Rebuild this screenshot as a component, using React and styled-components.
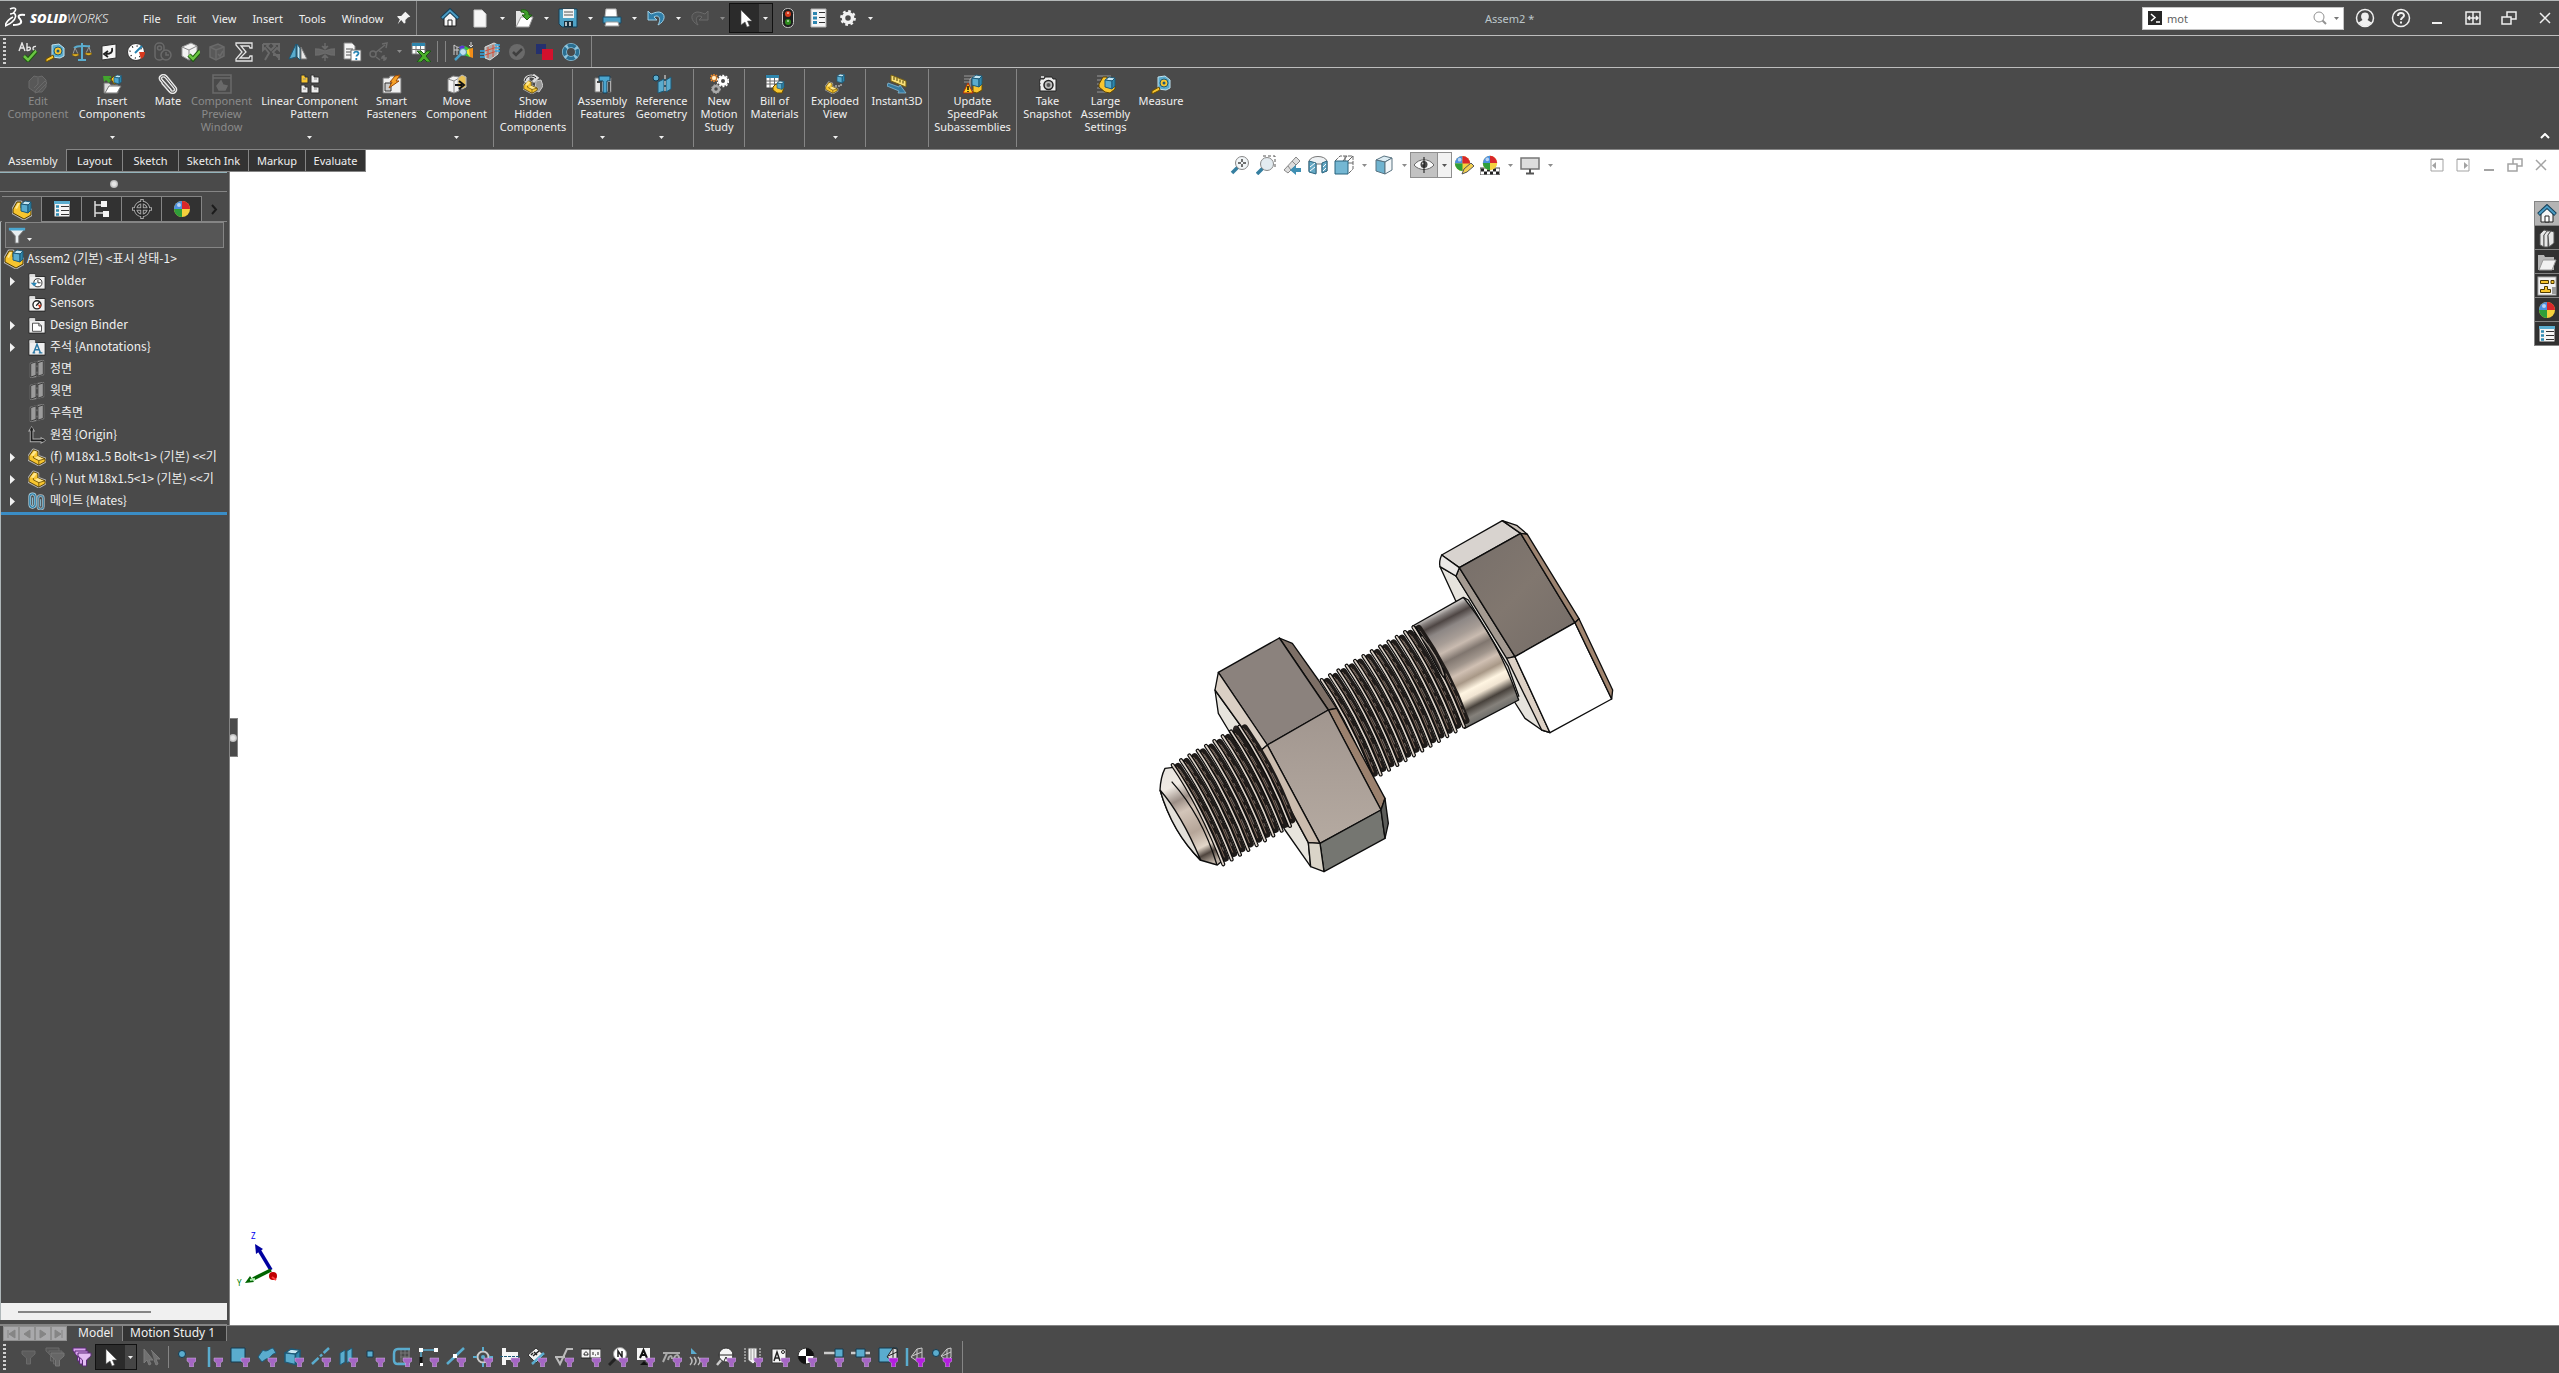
import React from 'react';
import styled, { createGlobalStyle, css } from 'styled-components';

const B = '#5aacce';
const D = '#1d5a78';
const W = '#f2f2f2';
const K = '#262626';
const Y = '#f7c52f';
const G = '#8c8c8c';
const X = '#6a6a6a';

const GlobalStyle = createGlobalStyle`
  * { box-sizing: border-box; }
  html, body, #root { height: 100%; }
  body {
    margin: 0;
    overflow: hidden;
    background: #4a4a4a;
    color: #f0f0f0;
    font: 11px/13px 'Noto Sans', 'Noto Sans CJK KR', sans-serif;
  }
  button, input { font: inherit; color: inherit; }
  svg { display: block; flex: none; }
`;

/* ---------- icons ---------- */

const Part = () => (
  <g strokeLinejoin="round">
    <path d="M1 9l5-7 5 2v5l8 3v3l-7 4-11-6z" fill="none" stroke="#b4b4b4" strokeWidth="3" />
    <path d="M1 9l5-7 5 2v5l8 3v3l-7 4-11-6z" fill={Y} stroke="#4f3a00" />
    <path d="M3 8l4-5 3 1-4 5zM7 11l4-2 6 3-4 2z" fill="#ffe78c" />
    <path d="M12 19v-5l-6-3V9M12 14l7-2" fill="none" stroke="#4f3a00" strokeWidth=".8" />
  </g>
);
const Cube = ({ x = 0, y = 0, c = B, s = D }) => (
  <g transform={`translate(${x} ${y})`} stroke={s} strokeLinejoin="round">
    <path d="M0 3l4-3 6 1-3 3z" fill="#c5e6f2" />
    <path d="M0 3l7 1v8l-7-2z" fill={c} />
    <path d="M7 4l3-3v8l-3 3z" fill="#2e87ac" />
  </g>
);
const Folder = ({ children }) => (
  <g>
    <path d="M1 2h7v3h11v14H1z" fill="#efefef" stroke="#222" />
    <path d="M2 2.500h6v3H2z" fill="#ddd" />
    {children}
  </g>
);
const Plane = (
  <g strokeLinejoin="round">
    <path d="M3 4l7-2 7-1v15l-7 2-7 1z" fill="#9c9c9c" stroke="#8f8f8f" strokeWidth="2" />
    <path d="M3 4l6-2v15l-6 2zM11 3l6-2v15l-6 2z" fill="#9c9c9c" stroke="#333" />
    <path d="M10 1v18" stroke="#2a2a2a" strokeDasharray="5 2" />
  </g>
);
const Ball = (
  <g>
    <circle cx="10" cy="10" r="8" fill="#f5d13d" />
    <path d="M10 10V2a8 8 0 0 0-8 8z" fill="#4b8fe0" />
    <path d="M10 10V2a8 8 0 0 1 8 8z" fill="#d9272b" />
    <path d="M10 10H2a8 8 0 0 0 8 8z" fill="#2f9e3a" />
    <circle cx="7" cy="6" r="2" fill="#fff" opacity=".6" />
  </g>
);
const House = (
  <g>
    <path d="M4 9l6-6 6 6v9H4z" fill="#f5f5f5" stroke="#222" />
    <path d="M8 12h4v6H8z" fill="#fff" stroke="#222" />
    <path d="M1.500 10.500L10 2.500l8.500 8" fill="none" stroke="#163f57" strokeWidth="4" />
    <path d="M2 10l8-7.500L18 10" fill="none" stroke="#4b9cc4" strokeWidth="2" />
  </g>
);
const Sheet = (
  <g>
    <path d="M2 2h16v16H2z" fill="#f4f4f4" stroke="#2b2b2b" />
    <path d="M2 2h16v3H2z" fill={B} />
    <path d="M4 7.500h3M4 11.500h3M4 15.500h3" stroke="#2e8ab2" strokeWidth="2.500" />
    <path d="M9 7.500h8M9 11.500h8M9 15.500h8" stroke="#333" />
  </g>
);
const Funnel = ({ c = '#a566c4' }) => (
  <path d="M11 11h9v3l-2.500 2v4h-4v-4L11 14z" fill={c} stroke="#d3b5e0" strokeWidth=".5" />
);
const BigFunnel = ({ x, y, c, s }) => (
  <path transform={`translate(${x} ${y})`} d="M0 0h13v3L8.500 7v6h-4V7L0 3z" fill={c} stroke={s} />
);
const Cursor = (
  <path d="M6 2v15l4-3 2 5 2.500-1-2-5H17z" fill="#fff" stroke="#555" strokeWidth=".6" />
);
const Tape = (
  <g>
    <path d="M7 3l7-1 5 4v8l-4 2-8-1z" fill={B} stroke="#bfe2ef" />
    <circle cx="13" cy="9" r="4" fill={Y} stroke={D} />
    <circle cx="13" cy="9" r="1.500" fill={D} />
    <path d="M8 13l-7 4v3l8-4z" fill={Y} stroke="#6b4e00" />
  </g>
);

const icons = {
  home: House,
  newDoc: <path d="M4 2h8l4 4v13H4z" fill="#f6f6f6" stroke="#ccc" />,
  open: (
    <g>
      <path d="M2 18V3h6l2 2h4v13z" fill="#e4e4e4" />
      <path d="M2 19L7 9h12l-4 10z" fill="#fff" stroke="#999" />
      <path d="M7 2c5-1 8 1 8 5h3l-5 5-5-5h3c0-2-1-3-4-3z" fill="#3fa02a" stroke="#1e5c12" />
    </g>
  ),
  save: (
    <g>
      <path d="M1 1h18v18H4l-3-3z" fill="#4fa3c7" stroke="#173f55" />
      <path d="M5 1h11v9H5z" fill="#f3f3f3" />
      <path d="M6 4h9M6 7h9" stroke="#555" />
      <path d="M6 13h9v6H6z" fill="#16303f" />
      <path d="M8 14v4M12 14v4" stroke="#eee" strokeWidth="1.500" />
    </g>
  ),
  print: (
    <g>
      <path d="M4 1h10l1 8H3z" fill="#fff" stroke="#bbb" />
      <path d="M1 9h18v6H1z" fill="#4a9fc4" stroke="#194b64" />
      <path d="M4 14h12l1 4H3z" fill="#fff" stroke="#999" />
    </g>
  ),
  undo: <path d="M2 3v9h9l-3-3c4-3 8 1 4 8 8-4 8-12 1-13-3 0-5 1-8 2z" fill="#2f7ea8" stroke="#9fd0e6" />,
  redo: <path d="M18 3v9H9l3-3c-4-3-8 1-4 8-8-4-8-12-1-13 3 0 5 1 8 2z" fill="#505050" stroke={X} />,
  cursor: Cursor,
  traffic: (
    <g>
      <rect x="4.500" y=".5" width="11" height="19" rx="5" fill="#1e1e1e" stroke="#c9c9c9" />
      <circle cx="10" cy="6" r="3" fill="#d43a1b" />
      <circle cx="10" cy="14" r="3" fill="#2e8c1d" />
      <path d="M9 5h2M9 13h2" stroke="#fff" />
    </g>
  ),
  options: (
    <g>
      <path d="M3 1h15v18H3z" fill="#f5f5f5" stroke="#b0b0b0" />
      <path d="M5 5.500h4M5 10h4M5 14.500h4" stroke="#2c86b0" strokeWidth="3" />
      <path d="M11 4.500h6M11 9.500h6M11 14.500h6" stroke="#333" />
    </g>
  ),
  gear: (
    <g>
      <circle cx="10" cy="10" r="4.500" fill="none" stroke="#f2f2f2" strokeWidth="3.500" />
      <circle cx="10" cy="10" r="6.800" fill="none" stroke="#f2f2f2" strokeWidth="2.200" strokeDasharray="2.700 2.640" />
    </g>
  ),
  pin: <path d="M12 1l7 7-2 1-1 0-4 4 0 4-2 1-4-5-5 6 3-7-4-4 2-1 4 0 4-4z" fill="#f4f4f4" />,

  spell: (
    <g>
      <path d="M1 9L4 1l3 8M2 6h4M9 1v8M9 6c4-3 5 3 0 2.500M18 4.500c-4-1-4 5 0 4" fill="none" stroke="#e8e8e8" strokeWidth="1.400" />
      <path d="M6 14l4 4 8-9" fill="none" stroke="#1d5a10" strokeWidth="4.500" />
      <path d="M6 14l4 4 8-9" fill="none" stroke="#6cc644" strokeWidth="2.500" />
    </g>
  ),
  tape: Tape,
  scale: (
    <g fill="none" stroke={B} strokeWidth="2">
      <path d="M10 1v16M2 6c5-4 11-1 16-2M6 18h8" />
      <path d="M1 12l2-6 3 6M14 11l3-6 2 6" stroke="#999" strokeWidth="1" />
      <path d="M0 12h7c0 3-7 3-7 0zM13 11h7c0 3-7 3-7 0z" fill={Y} stroke="#6b4e00" strokeWidth=".7" />
    </g>
  ),
  replace: (
    <g>
      <path d="M3 4l14-2v14L3 18z" fill="#f5f5f5" stroke="#333" />
      <path d="M13 6c1 4-1 6-6 6M9 9l-4 3 4 3" fill="none" stroke="#222" strokeWidth="1.800" />
    </g>
  ),
  gauge: (
    <g>
      <circle cx="10" cy="10" r="8.500" fill="#fff" stroke="#333" />
      <circle cx="10" cy="10" r="6" fill="none" stroke="#222" strokeWidth="1.500" strokeDasharray="1 3.700" />
      <path d="M13 10h6c0 4-2 6-4 7z" fill="#d8391e" />
      <path d="M9 11l7-7" stroke="#2682af" strokeWidth="2" />
    </g>
  ),
  perf: (
    <g fill="none" stroke={X} strokeWidth="1.500">
      <rect x="2" y="1" width="9" height="17" rx="4" />
      <circle cx="6.500" cy="6" r="2" />
      <circle cx="13" cy="13" r="5" fill="#4a4a4a" />
      <path d="M13 10v3h3" />
    </g>
  ),
  check: (
    <g>
      <path d="M2 5l9-4 6 3v10l-8 4-7-4z" fill="#f2f2f2" stroke="#999" />
      <path d="M2 5l7 3 8-4M9 8v10" fill="none" stroke="#888" />
      <path d="M9 13l4 4 7-8" fill="none" stroke="#1d5a10" strokeWidth="4.500" />
      <path d="M9 13l4 4 7-8" fill="none" stroke="#6cc644" strokeWidth="2.500" />
    </g>
  ),
  checkOff: (
    <g fill="none" stroke={X} strokeWidth="1.500">
      <path d="M3 5l8-3 6 3v9l-8 4-6-3z" fill="#595959" />
      <path d="M3 5l6 3 8-3M9 8v10M11 12l2 2 3-5" />
    </g>
  ),
  sigma: <path d="M2 1h16v5h-2l-1-2H7l5 6-6 6h9l1-2h2v5H2v-2l6-7-6-7z" fill="#4a4a4a" stroke="#e4e4e4" strokeWidth="1.300" />,
  shuffle: (
    <path d="M2 2h6L6 4l4 4 4-4-2-2h6v6l-2-2-4 4 6 6M2 2v6l2-2 4 5-4 7M12 13h6v5" fill="none" stroke={X} strokeWidth="2" />
  ),
  mirror: (
    <g>
      <path d="M1 17L8 2v13z" fill={B} stroke={D} />
      <path d="M9 15V2l3 4v12z" fill="#bfe2ef" stroke={D} />
      <path d="M13 17V5l6 12z" fill="#e8e8e8" stroke="#777" />
    </g>
  ),
  compress: (
    <path d="M0 7c7 0 7 2 10 2s3-2 10-2v6c-7 0-7-2-10-2s-3 2-10 2zM10 1v5M7 4l3 3 3-3M10 19v-5M7 16l3-3 3 3" fill="#666" stroke={X} strokeWidth="1.500" />
  ),
  docHelp: (
    <g>
      <path d="M2 1h8l3 3v13H2z" fill="#f5f5f5" stroke="#888" />
      <path d="M4 7h7M4 10h5M4 13h5" stroke="#555" />
      <path d="M9 8h10v11H9z" fill="#fff" stroke="#666" />
      <path d="M12 11.500c0-3 5-2 4.500 0-.3 1.500-2 1.500-2 3M14.300 16v2" fill="none" stroke="#2a86b5" strokeWidth="1.800" />
    </g>
  ),
  steps: (
    <g fill="none" stroke={X} strokeWidth="1.500">
      <circle cx="4" cy="12" r="3" />
      <path d="M6 11L16 3M13 2l5-1-1 5M10 9l3 1M7 15l4 3M15 13v6M12 16h6M13 14l4 4" />
    </g>
  ),
  excel: (
    <g>
      <path d="M1 1h13v11H1z" fill="#fff" stroke="#777" />
      <path d="M1 1h13v3H1z" fill="#2f86ad" />
      <path d="M1 7.500h13M5 4v8M9.500 4v8" stroke="#777" />
      <path d="M6 9h4l3 3 3-3h4l-5 5 5 6h-4l-3-3-3 3H6l5-6z" fill="#4caf2c" stroke="#195a12" />
    </g>
  ),
  rainbow: (
    <g>
      <path d="M1 3v10M4 5v8M1 3c4 3 6 3 8 1M1 8h5" fill="none" stroke="#d0d0d0" />
      <path d="M6 5c6-5 9 4 14 1v9h-3c-4-1-6-1-10-7z" fill="#39c531" />
      <path d="M6 5c3-2 4-2 6 0l-4 5z" fill="#5f35d6" />
      <path d="M15 7l5-1v10l-3-1z" fill="#f28c18" />
      <path d="M12 9l4-2 1 8z" fill="#f2e638" />
      <circle cx="10" cy="10" r="3.500" fill="#bfe0ef" stroke="#4c8aa8" />
      <path d="M8 12l-6 6" stroke="#4aa0c8" strokeWidth="2.500" />
      <path d="M18 0v4M16 3l2 2 2-2" stroke="#ddd" fill="none" />
    </g>
  ),
  mesh: (
    <g>
      <path d="M5 5l9-4 4 2v9l-8 6-5-2z" fill="#a9a9a9" stroke="#ddd" />
      <path d="M8 5v11M13 3v12M5 9l12-4M5 13l12-4" stroke="#d6503c" fill="none" />
      <path d="M0 9h5M0 12h5M0 15h5M15 3h5M15 6h5M15 9h5" stroke="#35a9e8" strokeWidth="1.500" />
    </g>
  ),
  tick: (
    <g>
      <circle cx="10" cy="10" r="8" fill={X} />
      <path d="M6 10l3 3 6-6" fill="none" stroke="#3f3f3f" strokeWidth="2.500" />
    </g>
  ),
  squares: (
    <g>
      <path d="M2 2h10v10H2z" fill="#24306e" />
      <path d="M8 7h11v11H8z" fill="#d3112d" />
    </g>
  ),
  cycle: (
    <g fill="none">
      <circle cx="10" cy="10" r="6.500" stroke="#8fc4dc" strokeWidth="5" />
      <circle cx="10" cy="10" r="6.500" stroke="#2a6f92" strokeWidth="3.500" strokeDasharray="8 2.210" strokeDashoffset="4" />
    </g>
  ),

  editPart: (
    <g fill="#585858" stroke={X}>
      <path d="M1 7l5-5 4 1 4-1 4 4v7l-4 5H7l-6-4z" />
      <path d="M10 4v6l-4 4M8 16l9-9 2 2-9 9-3 1z" />
    </g>
  ),
  insert: (
    <g>
      <path d="M2 19V9h5l2 2h7v8z" fill="#ddd" stroke="#777" />
      <path d="M3 19l4-7h12l-4 7z" fill="#fff" stroke="#777" />
      <path d="M1 2h8v2H7l2 2-2 3-3-3-2 2z" fill="#42a52d" />
      <path d="M9 5l3-3 3 1v6l-3 1z" fill={Y} stroke="#6b4e00" />
      <g transform="translate(12 1) scale(.75)"><Cube c="#4ba5ce" /></g>
    </g>
  ),
  clip: (
    <g fill="none" strokeLinecap="round">
      <path d="M5 9l7 8c3 3 7 0 5-3L8 3C5 0 1 3 3 6l9 10" stroke="#e9e9e9" strokeWidth="3.500" />
      <path d="M7 6l7 9M5 9l7 8c3 3 7 0 5-3L8 3C5 0 1 3 3 6l9 10" stroke="#555" />
    </g>
  ),
  preview: (
    <g fill="none" stroke={X} strokeWidth="1.500">
      <path d="M1 1h18v18H1zM1 4h18" />
      <path d="M5 12l4-5 2 4 4 1-2 4H7z" fill={X} />
    </g>
  ),
  pattern: (
    <g fill="#eee" stroke="#333">
      <path d="M1 1h4v2h3v6H1z" fill={Y} />
      <path d="M11 1h3v2h5v6h-8zM1 11h4v2h3v6H1zM11 11h3v2h5v6h-8z" />
      <path d="M3 5h3M14 5h3M3 15h3M14 15h3" stroke={G} />
    </g>
  ),
  fasten: (
    <g>
      <path d="M1 4h6l1-2h5v2h6v15H1z" fill="#f0f0f0" stroke="#777" />
      <path d="M3 9h6v8H3z" fill="#ccc" stroke="#333" />
      <path d="M13 2l5-1-4 6h3L7 14l3-6H8z" fill="#f8a328" stroke="#9a4a08" />
    </g>
  ),
  move: (
    <g>
      <path d="M1 5l5-3 6 1v14l-5 2-6-2z" fill="#f2f2f2" stroke="#888" />
      <path d="M1 5l6 2 5-3M7 7v12" fill="none" stroke="#888" />
      <path d="M11 4l4-3 4 2v10l-4 2-4-2z" fill="#e9c257" stroke="#b9b9b9" />
      <path d="M8 11h7M12 7l5 4-5 4" fill="none" stroke="#111" strokeWidth="2" />
    </g>
  ),
  showHidden: (
    <g>
      <path d="M13 7l5-1 2 6-4 6-4-2z" fill="#999" stroke="#ccc" />
      <g transform="translate(0 5) scale(.75)"><Part /></g>
      <path d="M2 7c1-6 8-6 11-3M10 1l4 3-4 4M6 4l-4 4" fill="none" stroke="#ddd" strokeWidth="3" />
      <path d="M2 7c1-6 8-6 11-3" fill="none" stroke="#222" />
    </g>
  ),
  asmFeat: (
    <g>
      <path d="M2 4h16v14H2z" fill="#e8e8e8" stroke="#777" />
      <path d="M4 8h4v10M16 8v10" fill="none" stroke="#444" strokeWidth="2" />
      <path d="M6 2h11v5h-3v12h-4V7H6z" fill="#4ba5ce" stroke="#163f57" />
    </g>
  ),
  refGeo: (
    <g>
      <circle cx="4" cy="4" r="3" fill={B} stroke="#123a50" />
      <path d="M6 8l6-3v12l-6 2zM14 6l5-3v12l-5 3z" fill={B} stroke={D} />
      <path d="M13 1v18" stroke="#eee" strokeDasharray="4 2" />
    </g>
  ),
  motion: (
    <g>
      <path d="M5 0v8M1 4h8M2 1l6 6M8 1L2 7" stroke="#f08a2a" strokeWidth="1.500" />
      <circle cx="5" cy="4" r="2" fill="#fff2d0" />
      <circle cx="14" cy="7" r="3.500" fill="none" stroke="#fff" strokeWidth="3" />
      <circle cx="14" cy="7" r="5.500" fill="none" stroke="#fff" strokeWidth="1.500" strokeDasharray="2 1.500" />
      <circle cx="7" cy="15" r="3" fill="none" stroke="#aaa" strokeWidth="2.500" />
      <circle cx="7" cy="15" r="4.500" fill="none" stroke="#aaa" strokeDasharray="1.500 1.500" />
    </g>
  ),
  bom: (
    <g>
      <path d="M1 1h13v13H1z" fill="#fff" stroke="#444" />
      <path d="M1 1h13v3H1z" fill="#2f86ad" />
      <path d="M1 7h13M1 10h13M5 4v10M9.500 4v10" stroke="#666" />
      <path d="M8 13l3-3 4 1 4 3-2 5h-5l-4-3z" fill={Y} stroke="#6b4e00" />
      <g transform="translate(12 7) scale(.7)"><Cube /></g>
    </g>
  ),
  explode: (
    <g>
      <g transform="translate(0 7) scale(.65)"><Part /></g>
      <g transform="translate(12 0) scale(.75)"><Cube /></g>
      <path d="M10 12h6v-3" fill="none" stroke="#ddd" strokeDasharray="2 1" />
    </g>
  ),
  instant: (
    <g>
      <path d="M4 1l15 6v6L4 7z" fill="#fbe27a" stroke="#7a6210" />
      <path d="M7 3v3M10 4v3M13 5.500v3M16 6.500v3" stroke="#4a3a00" />
      <path d="M1 9l11 4 1-2 6 8h-8l1-2L0 12z" fill="#3579a0" stroke="#8fc4dc" strokeWidth=".7" />
    </g>
  ),
  speedpak: (
    <g>
      <path d="M1 2h11M1 5h9M1 8h8" stroke="#999" />
      <path d="M7 5l5-3v14l-5 1z" fill="#555" stroke="#bbb" />
      <path d="M10 8l5 2 4-3v9l-5 3-4-1z" fill={Y} stroke="#6b4e00" />
      <Cube x={9} y={1} />
      <path d="M5 9l5 10H0z" fill="#ffd21f" stroke="#b12a0b" />
      <path d="M5 12v4M5 17v1" stroke="#111" strokeWidth="1.500" />
    </g>
  ),
  camera: (
    <g>
      <path d="M2 5h4l1-2h7l1 2h3v12H2z" fill="#eee" stroke="#222" />
      <path d="M3 3h3M2 8h2M2 11h2" stroke="#eee" strokeWidth="1.500" />
      <circle cx="10.500" cy="11" r="4.500" fill="#bbb" stroke="#222" strokeWidth="1.500" />
      <circle cx="10.500" cy="11" r="2" fill="#555" />
    </g>
  ),
  large: (
    <g>
      <path d="M1 2h14M1 6h8M1 10h6M1 14h6M1 18h12" stroke="#999" />
      <path d="M3 10l4-7h4v5l8 3v4l-5 4-5-1-6-5z" fill={Y} stroke="#5e4300" />
      <Cube x={9} y={3} />
    </g>
  ),

  assembly: (
    <g strokeLinejoin="round">
      <path d="M1 9l4-7h4v6l6 4 4-2v5l-7 4-11-6z" fill={Y} stroke="#b4b4b4" strokeWidth="3" />
      <path d="M1 9l4-7h4v6l6 4 4-2v5l-7 4-11-6z" fill={Y} stroke="#4f3a00" />
      <path d="M3 8l3-5h2l-3 6z" fill="#ffe78c" />
      <Cube x={9} y={1} />
    </g>
  ),
  sheet: Sheet,
  config: (
    <g>
      <path d="M3 2v16M3 6h8M3 14h8" fill="none" stroke="#ddd" strokeWidth="1.500" />
      <path d="M9 2h6v6H9zM11 12h6v6h-6z" fill="#f5f5f5" />
    </g>
  ),
  target: (
    <g fill="none" stroke="#a8a8a8">
      <path d="M10 0v20M0 10h20" strokeWidth="3.500" />
      <circle cx="10" cy="10" r="6.500" strokeWidth="3.500" />
      <path d="M10 1v18M1 10h18" stroke="#222" strokeWidth="1.500" />
      <circle cx="10" cy="10" r="6.500" stroke="#222" strokeWidth="1.500" />
    </g>
  ),
  ball: Ball,
  filter: (
    <g>
      <path d="M1 3h18l-7 8v8H8v-8z" fill="#e9eef0" stroke="#777" />
      <path d="M1 2h18v3H1z" fill="#4aa6d0" />
    </g>
  ),
  history: (
    <Folder>
      <circle cx="11" cy="12" r="4.500" fill="#fff" stroke="#222" />
      <path d="M11 9v3h3" fill="none" stroke="#222" />
      <path d="M3 12h7l-3 4z" fill="#2a86b5" />
    </Folder>
  ),
  sensors: (
    <Folder>
      <circle cx="10" cy="12" r="4.500" fill="#fff" stroke="#222" strokeWidth="1.500" />
      <path d="M9 13l4-4" stroke="#222" strokeWidth="1.500" />
      <path d="M11 12h4l-2 4z" fill="#d8391e" />
    </Folder>
  ),
  binder: (
    <Folder>
      <path d="M5 8h7l3 3v6H5z" fill="#fff" stroke="#444" />
      <path d="M12 8v3h3" fill="none" stroke="#444" />
    </Folder>
  ),
  notes: (
    <Folder>
      <path d="M6 17l4-10 4 10M8 13h5M5 16.500h3M12 16.500h4" fill="none" stroke="#2a78a5" strokeWidth="1.600" />
    </Folder>
  ),
  plane: Plane,
  origin: (
    <g>
      <path d="M4 3v13h14" fill="none" stroke="#b0b0b0" strokeWidth="4" />
      <path d="M4 0L0 6h8zM20 16l-6-4v8z" fill="#b0b0b0" />
      <path d="M4 2v14h14" fill="none" stroke="#1e1e1e" strokeWidth="2" />
      <path d="M4 1L2 5h4zM19 16l-4-2v4z" fill="#1e1e1e" />
    </g>
  ),
  part: <Part />,
  mates: (
    <g fill="none">
      <rect x="2" y="2" width="6" height="15" rx="3" stroke="#bfe2ef" strokeWidth="3" />
      <rect x="2" y="2" width="6" height="15" rx="3" stroke="#2f7ea6" strokeWidth="1.500" />
      <rect x="11" y="4" width="6" height="15" rx="3" stroke="#bbb" strokeWidth="3" />
      <rect x="11" y="4" width="6" height="15" rx="3" stroke="#4787a5" strokeWidth="1.500" />
      <path d="M5 6v9M14 8v8" stroke="#8fc9e2" />
    </g>
  ),

  zoomFit: (
    <g>
      <path d="M8 12l-6 6" stroke="#357fa0" strokeWidth="3.500" />
      <circle cx="12" cy="8" r="6.500" fill="#f1f5f7" stroke="#888" />
      <path d="M12 4v8M8 8h8" stroke="#444" strokeDasharray="3 2" strokeWidth="1.500" />
    </g>
  ),
  zoomArea: (
    <g>
      <path d="M7 1h12v12" fill="none" stroke="#555" strokeDasharray="3 2" />
      <path d="M7 13l-6 6" stroke="#357fa0" strokeWidth="3.500" />
      <circle cx="11" cy="9" r="6.500" fill="#e3ebf0" stroke="#888" />
    </g>
  ),
  prevView: (
    <g>
      <path d="M2 15L14 2l4 4L6 18z" fill="#ddd" stroke="#888" />
      <path d="M10 6l4 4M6 11l3 4" stroke="#888" />
      <path d="M19 13h-5v-3l-6 5 6 5v-3h5z" fill="#3f8fb3" />
    </g>
  ),
  section: (
    <g>
      <path d="M1 6c2-6 16-6 18 0v10l-5 1V9H8v9l-7-2z" fill="#eef1f3" stroke="#777" />
      <path d="M1 6l7 2v11l-7-2zM14 8l5-2v10l-5 2z" fill="#66a9c5" stroke="#2c6782" />
      <path d="M2 12l5-4M2 16l5-4M15 12l3-3M15 16l3-3" stroke="#fff" />
    </g>
  ),
  orient: (
    <g>
      <path d="M1 6l5-5h13v13l-5 5" fill="none" stroke="#666" strokeDasharray="4 1" />
      <path d="M11 1v5M19 8h-5M9 6l4-5M14 6l5-5" stroke="#666" />
      <path d="M1 6h13v13H1z" fill="#74b7d3" stroke="#29627d" />
    </g>
  ),
  display: (
    <g strokeLinejoin="round" stroke="#587280">
      <path d="M2 5l8-4 8 2-7 4z" fill="#dcecf3" />
      <path d="M2 5l9 2v12l-9-3z" fill="#6fb3cf" />
      <path d="M11 7l7-4v12l-7 4z" fill="#f2f6f8" />
    </g>
  ),
  eye: (
    <g>
      <path d="M0 10c5-7 15-7 20 0-5 6-15 6-20 0z" fill="#fafafa" stroke="#666" />
      <circle cx="10" cy="9.500" r="3.500" fill="#4a4a4a" />
      <circle cx="9" cy="8.500" r="1" fill="#ddd" />
      <path d="M10 2v16" stroke="#111" />
    </g>
  ),
  appearance: (
    <g>
      <g transform="translate(-1 -1) scale(.95)">{Ball}</g>
      <path d="M8 19l2-5 7-6 3 3-7 6z" fill="#f4cf50" stroke="#555" />
    </g>
  ),
  scene: (
    <g>
      <path d="M0 13h20v7H0z" fill="#fff" stroke="#444" />
      <path d="M1 15h3M7 15h3M13 15h3M4 18h3M10 18h3M16 18h3" stroke="#222" strokeWidth="3" />
      <g transform="translate(1 -1) scale(.9)">{Ball}</g>
    </g>
  ),
  monitor: (
    <g>
      <path d="M1 3h18v11H1z" fill="#dedede" stroke="#777" strokeWidth="1.500" />
      <path d="M10 14v4M6 18.500h8" stroke="#555" strokeWidth="2" />
    </g>
  ),

  library: (
    <g fill="#e6e6e6" stroke="#555">
      <path d="M3 6l4-4 4 1-4 4v12l-4-2z" />
      <path d="M7 7l3-4 4 0-3 4v12l-4 0z" />
      <path d="M11 7l3-4 3 1v11l-5 4z" />
    </g>
  ),
  explorer: (
    <g>
      <path d="M1 3h6l1 2h9v13H1z" fill="#b5b5b5" />
      <path d="M2 18l4-10h13l-4 10z" fill="#f2f2f2" stroke="#999" />
    </g>
  ),
  palette: (
    <g>
      <rect x="1" y="1" width="18" height="18" fill="#f2f2f2" stroke="#aaa" />
      <path d="M3.500 4.500h8v3h-8zM14 4.500h3v3h-3zM7.500 10.500h3v3h3v3h-10v-3h4z" fill={Y} stroke="#4f3a00" />
      <path d="M15 11h4v7h-4z" fill="#999" />
    </g>
  ),

  fOff: <BigFunnel x={4} y={4} c="#5c5c5c" s={X} />,
  fOffs: (
    <g>
      <BigFunnel x={1} y={1} c="#555" s={X} />
      <BigFunnel x={4} y={4} c="#555" s={X} />
      <BigFunnel x={6} y={6} c="#666" s="#777" />
    </g>
  ),
  fAll: (
    <g>
      <BigFunnel x={1} y={1} c="#d7a2ec" s="#5c2a78" />
      <BigFunnel x={3} y={4} c="#d7a2ec" s="#5c2a78" />
      <BigFunnel x={6} y={6} c="#e3bdf2" s="#5c2a78" />
    </g>
  ),
  cursors: (
    <path d="M3 2v14l3-3 2 5 2-1-2-4h4zM10 3l9 9h-4l2 5-2 1-2-5" fill="#707070" stroke="#7c7c7c" />
  ),
};

// the shape each selection filter adds behind its funnel
const filters = {
  Vertices: <circle cx="6" cy="7" r="3.500" fill={B} stroke="#123a50" />,
  Edges: <path d="M6 0v20" stroke={B} strokeWidth="2.500" />,
  Faces: <path d="M1 1h14v14H1z" fill={B} stroke="#123a50" />,
  'Surface Bodies': <path d="M1 10l5-7c4 3 7-2 10-2l3 5c-5 1-6 6-10 6l-4 3z" fill={B} stroke={D} />,
  'Solid Bodies': <g transform="translate(1 2) scale(1.500 1.300)"><Cube /></g>,
  Axes: <path d="M1 17L18 1" stroke={B} strokeWidth="2.500" strokeDasharray="9 2 3 2" />,
  Planes: <path d="M2 6l5-3v12l-5 3zM9 4l5-3v12l-5 3z" fill={B} stroke={D} />,
  'Sketch Points': <path d="M2 4h6v6H2z" fill={B} stroke="#123a50" />,
  Sketches: (
    <g fill="none">
      <path d="M17 2v14H6" stroke={G} />
      <path d="M8 6h9M8 10h9M9 3v13M13 3v13" stroke="#777" />
      <path d="M18 2H6Q2 2 2 7v6q0 4 4 4h12" stroke={B} strokeWidth="2.500" />
    </g>
  ),
  'Sketch Segments': (
    <g>
      <path d="M2 18V3M3 3h14" stroke={B} strokeWidth="1.500" />
      <path d="M2 10v8" stroke="#111" strokeWidth="3" />
      <path d="M0 1h4v4H0zM15 1h4v4h-4zM1 16h3v3H1z" fill="#fff" />
    </g>
  ),
  Midpoints: (
    <g>
      <path d="M1 17L18 1" stroke={B} strokeWidth="2.500" />
      <path d="M7 7h4v4H7z" fill="#fff" />
    </g>
  ),
  'Center Marks': (
    <g fill="none">
      <circle cx="10" cy="10" r="5.500" stroke="#ccc" strokeWidth="2" />
      <path d="M10 0v4M10 16v4M0 10h4M16 10h4" stroke={B} strokeWidth="2" />
      <circle cx="10" cy="10" r="2" fill={B} />
    </g>
  ),
  Centerlines: (
    <g>
      <path d="M2 1h4v17H2zM6 5h12v8H6z" fill="#f5f5f5" />
      <path d="M0 9.500h20" stroke={D} strokeDasharray="3 1" />
    </g>
  ),
  Dimensions: (
    <g>
      <path d="M1 8l8-7 8 7-8 8z" fill="#f2f2f2" stroke="#333" />
      <path d="M4 8l2-2M7 5l3 3M6 9l6-5" stroke="#222" strokeWidth="1.500" />
      <path d="M5 17L17 6" stroke={B} strokeWidth="2.500" />
    </g>
  ),
  'Surface Finish': <path d="M1 10h10M2 10l4 7 7-15h6" fill="none" stroke="#bbb" strokeWidth="2" />,
  'Geometric Tolerances': (
    <g>
      <path d="M0 2h20v9H0z" fill="#f5f5f5" stroke="#222" />
      <path d="M9 2v9M3 8c0-4 4-4 4 0zM12 5v3M14 8h1M17 5v3" fill="none" stroke="#222" />
    </g>
  ),
  Notes: (
    <g>
      <path d="M8 11l-7 7" stroke="#222" strokeWidth="3" />
      <circle cx="12" cy="7" r="6.500" fill="#fff" stroke="#999" />
      <path d="M10 10V4l4 6V4" fill="none" stroke="#222" strokeWidth="1.500" />
    </g>
  ),
  'Datum Features': (
    <g>
      <path d="M2 1h13v12H2z" fill="#f5f5f5" />
      <path d="M5 11l3.500-8L12 11M6 8h5" fill="none" stroke="#111" strokeWidth="2" />
      <path d="M5 18l4-4 4 4z" fill="#111" />
    </g>
  ),
  Welds: <path d="M1 15l4-9h13M6 13c1-5 4-5 4-1M12 12c1-5 5-5 5-1M1 6l4 0" fill="none" stroke="#aaa" strokeWidth="2" />,
  'Weld Beads': (
    <g fill="none">
      <path d="M2 1v6h6z" fill={B} />
      <path d="M1 10q4 4 0 8M5 10q4 4 0 8M9 10q4 4 0 8" stroke="#bbb" strokeWidth="1.500" />
    </g>
  ),
  'Datum Targets': (
    <g>
      <path d="M6 12l-5 6" stroke="#ccc" strokeWidth="2.500" />
      <circle cx="10" cy="8" r="7" fill="#f5f5f5" stroke="#333" />
      <path d="M3 8h14M8 14l2-4 2 4" fill="none" stroke="#222" />
    </g>
  ),
  'Cosmetic Threads': (
    <g>
      <path d="M5 1h9v12l-4 4-5-4z" fill="#f2f2f2" stroke="#555" />
      <path d="M8 2v11M11 2v11" stroke="#999" />
      <path d="M2 1v14M17 1v10" stroke="#ddd" strokeDasharray="2 1" />
    </g>
  ),
  Blocks: (
    <g>
      <path d="M2 2h14v14H2z" fill="#f5f5f5" stroke="#333" />
      <path d="M4 14l3-9 3 9M5 11h4" fill="none" stroke="#222" strokeWidth="1.500" />
      <circle cx="13" cy="5" r="1.500" fill="none" stroke="#222" />
    </g>
  ),
  'Centers of Mass': (
    <g>
      <circle cx="9" cy="9" r="8" fill="#fff" stroke="#333" />
      <path d="M9 9V1a8 8 0 0 1 8 8zM9 9v8a8 8 0 0 1-8-8z" fill="#111" />
    </g>
  ),
  'Connection Points': (
    <g>
      <path d="M0 6h11" stroke="#ccc" strokeWidth="2.500" />
      <path d="M11 2h8v8h-8z" fill={B} stroke="#123a50" />
    </g>
  ),
  'Routing Points': (
    <g>
      <path d="M0 6h19" stroke="#ccc" strokeWidth="2.500" />
      <path d="M5 2h9v8H5z" fill={B} stroke="#123a50" />
    </g>
  ),
  'Mesh Facets': (
    <g>
      <path d="M1 1h18v14H1z" fill={B} stroke="#123a50" />
      <path d="M9 10l6-9 4 1v9l-4 3zM15 1v12M10 9l9-4" fill="#ddd" stroke="#222" />
    </g>
  ),
  'Mesh Edges': (
    <g>
      <path d="M2 1v18" stroke={B} strokeWidth="2.500" />
      <path d="M6 10l6-8 5-1v10l-5 3zM12 2v12M7 9l10-4" fill="#555" stroke="#ccc" />
    </g>
  ),
  'Mesh Vertices': (
    <g>
      <circle cx="4" cy="6" r="3.500" fill={B} stroke="#123a50" />
      <path d="M9 9l6-7 4-1v9l-4 4zM15 2v12M10 9l9-4" fill="#555" stroke="#ccc" />
    </g>
  ),
};

const Icon = ({ name, size = 20 }) => (
  <svg width={size} height={size} viewBox="0 0 20 20" aria-hidden="true">{icons[name]}</svg>
);

const Caret = ({ color = '#f0f0f0' }) => (
  <svg width="5" height="3" viewBox="0 0 5 3" aria-hidden="true"><path d="M0 0h5L2.500 3z" fill={color} /></svg>
);

/* ---------- shared parts ---------- */

const Shell = styled.div`
  display: flex;
  flex-direction: column;
  height: 100vh;
`;

const Bar = styled.div`
  display: flex;
  flex: none;
  align-items: center;
  background: #4a4a4a;
`;

const ToolButton = styled.button`
  display: flex;
  flex: none;
  align-items: center;
  justify-content: center;
  width: ${(p) => p.$w || 27}px;
  height: 26px;
  padding: 0;
  border: 0;
  background: none;
`;

const Rule = styled.div`
  flex: none;
  width: 1px;
  height: ${(p) => p.$h || '100%'};
  margin-left: ${(p) => p.$gap || 0}px;
  background: #858585;
`;

const Grip = styled.div`
  flex: none;
  width: 3px;
  height: 27px;
  margin: 0 8px 0 3px;
  background: repeating-linear-gradient(#d0d0d0 0 2px, transparent 2px 4px);
`;

const SelectBox = styled.div`
  display: flex;
  flex: none;
  height: ${(p) => p.$h}px;
  border: 1px solid #111;
  background: linear-gradient(90deg, #2b2b2b 29px, #454545 29px);
  align-items: center;
`;

/* ---------- title bar ---------- */

const TitleBar = styled(Bar)`
  height: 36px;
  border-top: 1px solid #b4b8b8;
  border-bottom: 1px solid #bdbdbd;
`;

const Logo = styled.h1`
  display: flex;
  align-items: center;
  gap: 4px;
  width: 143px;
  margin: 0;
  padding-left: 5px;
  font: italic 300 13px/18px 'Open Sans', sans-serif;
  color: #fff;

  b { font-weight: 800; }
`;

const Menu = styled.nav`
  display: flex;
  gap: 16px;
  margin-right: 14px;

  button {
    padding: 0;
    border: 0;
    background: none;
  }
`;

const QuickTools = styled.div`
  display: flex;
  align-items: center;
  padding-left: 18px;
`;

const DocTitle = styled.div`
  flex: 1;
  text-align: center;
  color: #bcc6ca;
`;

const Search = styled.label`
  display: flex;
  align-items: center;
  width: 202px;
  height: 23px;
  margin-right: 7px;
  padding: 0 2px 0 5px;
  gap: 5px;
  background: #fff;
  border: 1px solid #c4c4c4;

  input {
    flex: 1;
    min-width: 0;
    padding: 0;
    border: 0;
    outline: 0;
    color: #5f5f5f;
    background: none;
  }
`;

const WindowControls = styled.div`
  display: flex;
  gap: 8px;
`;

const menus = ['File', 'Edit', 'View', 'Insert', 'Tools', 'Window'];
const quick = [
  ['newDoc', 'New'],
  ['open', 'Open'],
  ['save', 'Save'],
  ['print', 'Print'],
  ['undo', 'Undo'],
  ['redo', 'Redo', true],
];

const line = { fill: 'none', stroke: 'currentColor', strokeWidth: 1.5 };
const controls = {
  Account: (
    <g>
      <circle cx="10" cy="10" r="8.500" {...line} />
      <path d="M10 4.500c3.500 0 4.500 3 3.500 6l-1 1.500 4 2.500c-3 5-10 5-13 0l4-2.500-1-1.500c-1-3 0-6 3.500-6z" fill="currentColor" />
    </g>
  ),
  Help: (
    <g {...line}>
      <circle cx="10" cy="10" r="8.500" />
      <path d="M7 8c0-4 6-4 6-.5 0 2-3 2-3 4.500M10 13.500v2" strokeWidth="2" />
    </g>
  ),
  Minimize: <path d="M5 14h10v2H5z" fill="currentColor" />,
  Span: <path d="M3 4h14v12H3zM10 4v12M5 10h10M7 8l-2 2 2 2M13 8l2 2-2 2" {...line} />,
  Restore: <path d="M3 9h9v7H3zM8 9V4h9v7h-5" {...line} />,
  Close: <path d="M5 5l10 10M15 5L5 15" {...line} />,
  'Pane Left': <g><path d="M4 4h12v12H4zM4 4.500h12" {...line} strokeWidth="1" /><path d="M9 7v7l-4-3.500z" fill="currentColor" /></g>,
  'Pane Right': <g><path d="M4 4h12v12H4zM4 4.500h12" {...line} strokeWidth="1" /><path d="M11 7v7l4-3.500z" fill="currentColor" /></g>,
};

const Control = ({ name, w }) => (
  <ToolButton $w={w} aria-label={name}>
    <svg width="20" height="20" viewBox="0 0 20 20">{controls[name]}</svg>
  </ToolButton>
);

/* ---------- toolbars ---------- */

const ToolsBar = styled(Bar)`
  height: 32px;
  border-bottom: 1px solid #bdbdbd;
`;

const RuleBox = styled.div`
  display: flex;
  flex: none;
  align-items: center;
  justify-content: center;
  gap: 7px;
  width: ${(p) => p.$w}px;
`;

const Ribbon = styled(Bar)`
  align-items: flex-start;
  height: 82px;
  padding: 1px 0 0 2px;
  border-bottom: 1px solid #858585;
`;

const RibbonButton = styled.button`
  display: flex;
  flex: none;
  flex-direction: column;
  align-items: center;
  width: ${(p) => p.$w}px;
  height: 78px;
  padding: 5px 0 8px;
  border: 0;
  background: none;
  white-space: pre;
  ${(p) => p.disabled && css`color: #8a8a8a;`}

  span { flex: 1; }
`;

const RibbonRule = styled(Rule)`
  height: 78px;
  margin: 0 1px;
`;

const Collapse = styled(ToolButton)`
  margin-left: auto;
  align-self: flex-end;
`;

const ribbon = [
  ['editPart', 'Edit\nComponent', 72, 'off'],
  ['insert', 'Insert\nComponents', 76, 'menu'],
  ['clip', 'Mate', 36],
  ['preview', 'Component\nPreview\nWindow', 71, 'off'],
  ['pattern', 'Linear Component\nPattern', 105, 'menu'],
  ['fasten', 'Smart\nFasteners', 59],
  ['move', 'Move\nComponent', 71, 'menu'],
  null,
  ['showHidden', 'Show\nHidden\nComponents', 76],
  null,
  ['asmFeat', 'Assembly\nFeatures', 57, 'menu'],
  ['refGeo', 'Reference\nGeometry', 61, 'menu'],
  null,
  ['motion', 'New\nMotion\nStudy', 48],
  null,
  ['bom', 'Bill of\nMaterials', 57],
  null,
  ['explode', 'Exploded\nView', 58, 'menu'],
  null,
  ['instant', 'Instant3D', 60],
  null,
  ['speedpak', 'Update\nSpeedPak\nSubassemblies', 85],
  null,
  ['camera', 'Take\nSnapshot', 59],
  ['large', 'Large\nAssembly\nSettings', 57],
  ['tape', 'Measure', 54],
];

/* ---------- workspace ---------- */

const Workspace = styled.main`
  display: flex;
  flex: 1;
  min-height: 0;
`;

const Side = styled.aside`
  display: flex;
  flex: none;
  flex-direction: column;
  width: 230px;
  z-index: 1;
`;

const CommandTabs = styled.div`
  display: flex;
  flex: none;
  width: max-content;
  height: 22px;
  border-bottom: 1px solid #858585;
  border-right: 1px solid #858585;
`;

const CommandTab = styled.button`
  width: ${(p) => p.$w}px;
  padding: 0;
  border: 0;
  border-left: 1px solid #858585;
  background: #333;
  ${(p) => p.$active && css`
    margin-top: -1px;
    border-left: 0;
    background: #4a4a4a;
  `}
`;

const Panel = styled.section`
  display: flex;
  flex: 1;
  flex-direction: column;
  min-height: 0;
  padding-right: 2px;
  background: #4a4a4a;
  border-right: 1px solid #858585;
`;

const PanelGrip = styled.div`
  display: flex;
  flex: none;
  align-items: center;
  justify-content: center;
  height: 20px;
  padding-top: 4px;
  border-top: 1px solid #93b3bb;
  border-bottom: 1px solid #858585;
`;

const Dot = styled.i`
  width: 8px;
  height: 8px;
  border-radius: 4px;
  background: radial-gradient(#e4e4e4 30%, #8a8a8a);
`;

const PanelTabs = styled.div`
  display: flex;
  flex: none;
  height: 26px;
  margin-top: 4px;
  padding-left: 2px;
  border-bottom: 1px solid #858585;
`;

const PanelTab = styled.button`
  display: flex;
  flex: none;
  align-items: center;
  justify-content: center;
  width: 40px;
  padding: 0;
  border: 1px solid #858585;
  border-width: 1px 1px 0 0;
  background: ${(p) => (p.$active ? '#4a4a4a' : '#323232')};
  ${(p) => p.$active && css`margin-bottom: -1px;`}
`;

const Tree = styled.div`
  display: flex;
  flex: 1;
  flex-direction: column;
  min-height: 0;
  border-left: 1px solid #aeb6b8;
  font-size: 12px;
  font-family: 'Noto Sans CJK KR', sans-serif;
`;

const FilterBox = styled.button`
  display: flex;
  flex: none;
  align-items: center;
  gap: 1px;
  height: 26px;
  margin: 0 3px 0 4px;
  padding: 0 3px 0 2px;
  border: 1px solid #858585;
  background: #565656;

  svg + svg { margin-top: 8px; }
`;

const TreeList = styled.ul`
  flex: none;
  margin: 0;
  padding: 0;
  list-style: none;
  border-bottom: 3px solid #3a8dc6;
`;

const TreeRow = styled.li`
  display: flex;
  align-items: center;
  height: 22px;
  padding-left: ${(p) => (p.$root ? 3 : 9)}px;
  line-height: 16px;
  white-space: nowrap;

  span {
    margin-left: ${(p) => (p.$root ? 3 : 4)}px;
    padding-bottom: 2px;
  }
`;

const ScrollTrack = styled.div`
  flex: none;
  height: 17px;
  margin-top: auto;
  padding: 8px 17px 7px;
  background: #f0f0f0;

  div {
    width: 133px;
    height: 2px;
    background: #858585;
  }
`;

const PanelFoot = styled.div`
  flex: none;
  height: 5px;
  border-bottom: 1px solid #858585;
`;

const Viewport = styled.section`
  position: relative;
  display: flex;
  flex: 1;
  align-items: center;
  justify-content: center;
  min-width: 0;
  padding: 0 9px 85px 0;
  background: #fff;
`;

const HeadsUp = styled.div`
  position: absolute;
  top: 2px;
  left: 0;
  right: 5px;
  display: flex;
  justify-content: center;
`;

const EyeBox = styled.div`
  display: flex;
  margin: 0 -1px;
  border: 1px solid #8f8f8f;
  background: linear-gradient(90deg, #c2c2c2 26px, #8f8f8f 26px 27px, #f2f2f2 27px);

  button { height: 24px; }
`;

const DocControls = styled.div`
  position: absolute;
  top: 2px;
  right: 5px;
  display: flex;
  color: #a3a3a3;
`;

const TaskPane = styled.div`
  position: absolute;
  top: 51px;
  right: 0;
  display: flex;
  flex-direction: column;
  width: 25px;
  border: 1px solid #858585;
  border-width: 1px 0 0 1px;
`;

const TaskButton = styled.button`
  display: flex;
  align-items: center;
  justify-content: center;
  height: 24px;
  padding: 0;
  border: 0;
  border-bottom: 1px solid #858585;
  background: ${(p) => (p.$active ? '#b4b4b4' : '#323232')};
`;

const Handle = styled.div`
  position: absolute;
  top: 568px;
  left: -1px;
  display: flex;
  align-items: center;
  width: 9px;
  height: 39px;
  background: #4a4a4a;
  border: 1px solid #858585;
  border-left: 0;
`;

const TriadSvg = styled.svg`
  position: absolute;
  left: 5px;
  bottom: 35px;
`;

const tabs = [['Assembly', 66], ['Layout', 56], ['Sketch', 56], ['Sketch Ink', 70], ['Markup', 57], ['Evaluate', 60]];

const tree = [
  ['history', 'Folder', true],
  ['sensors', 'Sensors'],
  ['binder', 'Design Binder', true],
  ['notes', '주석 {Annotations}', true],
  ['plane', '정면'],
  ['plane', '윗면'],
  ['plane', '우측면'],
  ['origin', '원점 {Origin}'],
  ['part', '(f) M18x1.5 Bolt<1> (기본) <<기', true],
  ['part', '(-) Nut M18x1.5<1> (기본) <<기', true],
  ['mates', '메이트 {Mates}', true],
];

/* ---------- footer ---------- */

const StudyTabs = styled(Bar)`
  align-items: stretch;
  height: 16px;
  padding-left: 3px;
  border-top: 1px solid #858585;
`;

const StepButton = styled.button`
  display: flex;
  align-items: center;
  justify-content: center;
  width: 16px;
  padding: 0;
  border: 1px solid #8f8f8f;
  background: #a9a9ab;
`;

const StudyTab = styled.button`
  width: ${(p) => p.$w}px;
  padding: 0 0 2px;
  border: 0;
  border-right: 1px solid #858585;
  background: ${(p) => (p.$active ? '#4a4a4a' : '#333')};
  font-size: 12px;
  line-height: 12px;
  text-align: left;
  padding-left: ${(p) => (p.$active ? 11 : 7)}px;
`;

const FilterBar = styled(Bar)`
  height: 32px;
`;

const steps = [
  ['First', 'M3 2v8M10 2v8L4 6z'],
  ['Previous', 'M9 2v8L3 6z'],
  ['Next', 'M3 2v8l6-4z'],
  ['Last', 'M9 2v8M2 2v8l6-4z'],
];

/* ---------- model ---------- */

// Visible half of each thread crest, stepping along the bolt axis.
const Thread = ({ x, y, count }) => (
  <g fill="none" strokeLinecap="round">
    {Array.from({ length: count }, (_, i) => {
      const px = x + i * 25;
      const py = y - i * 14.4;
      const d = `M${px} ${py}q86 126 152 298`;
      return (
        <g key={i}>
          <path d={`M${px + 16} ${py + 4}q86 124 142 276`} stroke="#1f1b19" strokeWidth="21" />
          <path d={`M${px + 13} ${py + 6}q86 124 142 270`} stroke="#80695b" strokeWidth="3" />
          <path d={`M${px + 20} ${py + 12}q84 120 136 254`} stroke="#a3968c" strokeWidth="2" strokeDasharray="30 14 9 22" />
          <path d={d} stroke="#0c0b0a" strokeWidth="12" />
          <path d={d} stroke="#ddd3ca" strokeWidth="5" />
        </g>
      );
    })}
  </g>
);

const Bolt = () => (
  <svg width="500" height="390" viewBox="0 0 1500 1170" role="img" aria-label="Bolt and nut">
    <defs>
      <linearGradient id="shank" gradientUnits="userSpaceOnUse" x1="895" y1="330" x2="1058" y2="645">
        <stop offset="0" stopColor="#e8e5e2" />
        <stop offset=".05" stopColor="#8a8482" />
        <stop offset=".1" stopColor="#4e4644" />
        <stop offset=".17" stopColor="#8d8785" />
        <stop offset=".27" stopColor="#a79d96" />
        <stop offset=".34" stopColor="#c9bbb0" />
        <stop offset=".42" stopColor="#80766f" />
        <stop offset=".5" stopColor="#a0958c" />
        <stop offset=".56" stopColor="#d0c0b3" />
        <stop offset=".64" stopColor="#a89887" />
        <stop offset=".72" stopColor="#fff5e2" />
        <stop offset=".78" stopColor="#f0e4d2" />
        <stop offset=".86" stopColor="#48423c" />
        <stop offset=".93" stopColor="#85817b" />
        <stop offset="1" stopColor="#6a6a67" />
      </linearGradient>
      <linearGradient id="tip" gradientUnits="userSpaceOnUse" x1="75" y1="820" x2="210" y2="1090">
        <stop offset="0" stopColor="#e9e5e0" />
        <stop offset=".15" stopColor="#efe9e2" />
        <stop offset=".3" stopColor="#9b8e86" />
        <stop offset=".42" stopColor="#d3c5b9" />
        <stop offset=".65" stopColor="#b5a598" />
        <stop offset=".82" stopColor="#e2d6c9" />
        <stop offset=".9" stopColor="#4f453e" />
        <stop offset="1" stopColor="#bdb1a5" />
      </linearGradient>
      <linearGradient id="headFace" x1="0" y1="0" x2="1" y2="1">
        <stop offset="0" stopColor="#766e69" />
        <stop offset=".5" stopColor="#81776f" />
        <stop offset="1" stopColor="#746c67" />
      </linearGradient>
      <linearGradient id="nutFace" x1="0" y1="0" x2="0" y2="1">
        <stop offset="0" stopColor="#a1968f" />
        <stop offset="1" stopColor="#b5aaa1" />
      </linearGradient>
    </defs>

    <g stroke="#0d0d0d" strokeWidth="4" strokeLinejoin="round">
      <path d="M900 200L945 298 1120 600 1155 655 1205 690 1230 698 1100 470 948 228z" fill="#e6e3dd" />
      <path d="M818 378L970 292Q1075 420 1136 600L974 685 850 480z" fill="url(#shank)" />
    </g>
    <Thread x={545} y={540} count={12} />
    <path d="M826 380q92 118 90 158-14-14-42-70z" fill="#2a2523" stroke="#0d0d0d" strokeWidth="4" />
    <path d="M845 410q50 62 66 116" fill="none" stroke="#a3988f" strokeWidth="4" />

    <g stroke="#0d0d0d" strokeWidth="4" strokeLinejoin="round">
      <path d="M948 228L958 203 1125 470 1100 475z" fill="#a49a91" />
      <path d="M1100 475L1125 470 1230 698 1205 690z" fill="#ddd1c5" />
      <path d="M970 292L985 300 1105 500 1137 590" fill="none" />
      <path d="M905 165L1087 62 1142 100 958 203z" fill="#d8d3cf" />
      <path d="M1087 62L1130 76 1162 103 1142 100z" fill="#c9c0b8" />
      <path d="M905 165L958 203 948 228 900 200Q896 185 905 165z" fill="#ebe8e6" />
      <path d="M958 203L1142 100 1305 368 1125 470z" fill="url(#headFace)" />
      <path d="M1142 100L1162 103 1317 356 1305 368z" fill="#9c8370" />
      <path d="M1125 470L1305 368 1415 597 1230 698z" fill="#fff" />
      <path d="M1305 368L1317 356 1418 570 1415 597z" fill="#a1856f" />

      <path d="M225 570L235 640 265 690 435 990 512 1100 505 1028 358 755z" fill="#e7e4dd" />
      <path d="M418 414L457 430 535 540 590 625 565 630z" fill="#7d6f66" />
      <path d="M565 630L590 625 735 895 723 930z" fill="#9b816e" />
      <path d="M235 517L418 414 565 630 382 735z" fill="#8b827d" />
      <path d="M382 735L565 630 723 930 540 1030z" fill="url(#nutFace)" />
      <path d="M540 1030L723 930 735 1015 552 1115z" fill="#757671" />
      <path d="M723 930L735 895 745 970 735 1015z" fill="#5b5c59" />
      <path d="M235 517L382 735 358 755 225 570z" fill="#dacfc4" />
      <path d="M382 735L358 755 505 1028 540 1030z" fill="#cbbcae" />
      <path d="M505 1028L540 1030 552 1115 512 1100z" fill="#dad4c8" />
      <path d="M75 805Q62 830 60 870 95 990 180 1080L232 1095 250 1080 120 800z" fill="url(#tip)" />
    </g>
    <path d="M278 690Q282 670 296 680 392 800 448 980L430 985z" fill="#2a2625" />
    <Thread x={98} y={795} count={9} />
    <g stroke="#0d0d0d" strokeWidth="4" fill="none">
      <path d="M60 870Q122 940 182 1080 98 1000 60 870z" fill="#e3e0da" />
      <path d="M95 845Q185 945 230 1092" />
    </g>
  </svg>
);

const Triad = () => (
  <TriadSvg width="50" height="60" viewBox="0 0 50 60" role="img" aria-label="Orientation triad">
    <path d="M36 40L24 20" stroke="#0000a0" strokeWidth="3.500" />
    <path d="M20 14l8 5-7 5z" fill="#0000a0" />
    <path d="M36 40L18 49" stroke="#006400" strokeWidth="3.500" />
    <path d="M10 53l5-7 4 6z" fill="#006400" />
    <path d="M15 50l5-1" stroke="#a8f0a8" strokeWidth="2" />
    <circle cx="38" cy="46" r="4" fill="#c00000" />
    <path d="M37 47l4 3" stroke="#ff4040" strokeWidth="2" />
    <text x="16" y="9" fontSize="8" fill="#0000f0">Z</text>
    <text x="2" y="56" fontSize="8" fill="#008000">Y</text>
  </TriadSvg>
);

const Row = ({ names, w }) => names.map((n) => (
  <ToolButton key={n} $w={w} aria-label={n}><Icon name={n} /></ToolButton>
));

export default function App() {
  return (
    <Shell>
      <GlobalStyle />
      <TitleBar as="header">
        <Logo>
          <svg width="21" height="22" viewBox="0 0 21 22" fill="none" stroke="#fff" strokeWidth="1.600" aria-hidden="true">
            <path d="M5 2c4-2 7-1 5 2-1 2-3 3-5 3M8 6c4 1 3 6-1 9-2 2-5 3-7 4 1-4 4-7 8-9" />
            <path d="M20 8c-6-1-8 1-5 4 3 4 0 6-7 6" strokeWidth="2" />
          </svg>
          <span><b>SOLID</b>WORKS</span>
        </Logo>
        <Menu>{menus.map((m) => <button key={m}>{m}</button>)}</Menu>
        <Icon name="pin" size={14} />
        <Rule $gap={5} />
        <QuickTools>
          <ToolButton $w={30} aria-label="Home"><Icon name="home" /></ToolButton>
          {quick.map(([icon, label, off]) => (
            <React.Fragment key={icon}>
              <ToolButton $w={30} aria-label={label}><Icon name={icon} /></ToolButton>
              <ToolButton $w={14} aria-label={`${label} menu`}><Caret color={off ? G : W} /></ToolButton>
            </React.Fragment>
          ))}
          <SelectBox $h={30}>
            <ToolButton $w={29} aria-label="Select"><Icon name="cursor" /></ToolButton>
            <ToolButton $w={13} aria-label="Select menu"><Caret /></ToolButton>
          </SelectBox>
          <Row names={['traffic', 'options', 'gear']} w={30} />
          <ToolButton $w={14} aria-label="Options menu"><Caret /></ToolButton>
        </QuickTools>
        <DocTitle>Assem2 *</DocTitle>
        <Search>
          <svg width="14" height="14" viewBox="0 0 14 14" aria-hidden="true">
            <path d="M0 0h14v14H0z" fill={K} />
            <path d="M3 3l4 3.500L3 10M8 11h4" fill="none" stroke="#fff" strokeWidth="1.500" />
          </svg>
          <input aria-label="Search commands" defaultValue="mot" />
          <svg width="14" height="14" viewBox="0 0 14 14" fill="none" stroke="#929292" aria-hidden="true">
            <circle cx="6" cy="6" r="5" />
            <path d="M9.500 9.500L13 13" strokeWidth="2" />
          </svg>
          <ToolButton $w={9} aria-label="Search options"><Caret color="#777" /></ToolButton>
        </Search>
        <WindowControls>
          {['Account', 'Help', 'Minimize', 'Span', 'Restore', 'Close'].map((n) => <Control key={n} name={n} w={28} />)}
        </WindowControls>
      </TitleBar>

      <ToolsBar>
        <Grip />
        <Row names={['spell', 'tape', 'scale', 'replace', 'gauge', 'perf', 'check', 'checkOff', 'sigma', 'shuffle', 'mirror', 'compress', 'docHelp', 'steps']} />
        <ToolButton $w={15} aria-label="More"><Caret color={G} /></ToolButton>
        <Row names={['excel']} />
        <RuleBox $w={15}><Rule $h="21px" /><Rule $h="21px" /></RuleBox>
        <Row names={['rainbow', 'mesh', 'tick', 'squares', 'cycle']} />
        <Rule $gap={7} />
      </ToolsBar>

      <Ribbon>
        {ribbon.map((item, i) => {
          if (!item) return <RibbonRule key={i} />;
          const [icon, label, w, mode] = item;
          return (
            <RibbonButton key={icon} $w={w} disabled={mode === 'off'}>
              <Icon name={icon} />
              <span>{label}</span>
              {mode === 'menu' && <Caret />}
            </RibbonButton>
          );
        })}
        <Collapse $w={28} aria-label="Collapse">
          <svg width="10" height="6" viewBox="0 0 10 6" fill="none" stroke="#fff" strokeWidth="2"><path d="M1 5l4-4 4 4" /></svg>
        </Collapse>
      </Ribbon>

      <Workspace>
        <Side>
          <CommandTabs>
            {tabs.map(([t, w], i) => <CommandTab key={t} $w={w} $active={i === 0}>{t}</CommandTab>)}
          </CommandTabs>
          <Panel>
            <PanelGrip><Dot /></PanelGrip>
            <PanelTabs>
              {['assembly', 'sheet', 'config', 'target', 'ball'].map((n, i) => (
                <PanelTab key={n} $active={i === 0} aria-label={n}><Icon name={n} /></PanelTab>
              ))}
              <ToolButton $w={25} aria-label="More tabs">
                <svg width="7" height="11" viewBox="0 0 7 11" fill="none" stroke="#1c1c1c" strokeWidth="2"><path d="M1 1l4 4.500L1 10" /></svg>
              </ToolButton>
            </PanelTabs>
            <Tree>
              <FilterBox aria-label="Filter tree"><Icon name="filter" size={18} /><Caret /></FilterBox>
              <TreeList>
                <TreeRow $root><Icon name="assembly" /><span>Assem2 (기본) &lt;표시 상태-1&gt;</span></TreeRow>
                {tree.map(([icon, label, expandable]) => (
                  <TreeRow key={label}>
                    <svg width="18" height="9" viewBox="0 0 18 9" aria-hidden="true">
                      {expandable && <path d="M0 0l5 4.500L0 9z" fill="#f2f2f2" />}
                    </svg>
                    <Icon name={icon} size={18} />
                    <span>{label}</span>
                  </TreeRow>
                ))}
              </TreeList>
              <ScrollTrack><div /></ScrollTrack>
            </Tree>
            <PanelFoot />
          </Panel>
        </Side>

        <Viewport>
          <Bolt />
          <Triad />
          <Handle><Dot /></Handle>
          <HeadsUp>
            <Row names={['zoomFit', 'zoomArea', 'prevView', 'section', 'orient']} w={26} />
            <ToolButton $w={14} aria-label="Orientation menu"><Caret color={G} /></ToolButton>
            <Row names={['display']} w={26} />
            <ToolButton $w={14} aria-label="Display menu"><Caret color={G} /></ToolButton>
            <EyeBox>
              <Row names={['eye']} w={26} />
              <ToolButton $w={14} aria-label="Hide menu"><Caret color="#555" /></ToolButton>
            </EyeBox>
            <Row names={['appearance', 'scene']} w={26} />
            <ToolButton $w={14} aria-label="Scene menu"><Caret color={G} /></ToolButton>
            <Row names={['monitor']} w={26} />
            <ToolButton $w={14} aria-label="View menu"><Caret color={G} /></ToolButton>
          </HeadsUp>
          <DocControls>
            {['Pane Left', 'Pane Right', 'Minimize', 'Restore', 'Close'].map((n) => <Control key={n} name={n} w={26} />)}
          </DocControls>
          <TaskPane>
            {['home', 'library', 'explorer', 'palette', 'ball', 'sheet'].map((n, i) => (
              <TaskButton key={n} $active={i === 0} aria-label={n}><Icon name={n} /></TaskButton>
            ))}
          </TaskPane>
        </Viewport>
      </Workspace>

      <StudyTabs>
        {steps.map(([n, d]) => (
          <StepButton key={n} aria-label={n}>
            <svg width="12" height="12" viewBox="0 0 12 12"><path d={d} fill="#858585" stroke="#858585" /></svg>
          </StepButton>
        ))}
        <StudyTab $w={56} $active>Model</StudyTab>
        <StudyTab $w={104}>Motion Study 1</StudyTab>
      </StudyTabs>

      <FilterBar>
        <Grip />
        <Row names={['fOff', 'fOffs', 'fAll']} />
        <SelectBox $h={26}>
          <ToolButton $w={28} aria-label="Select"><Icon name="cursor" /></ToolButton>
          <ToolButton $w={12} aria-label="Select menu"><Caret /></ToolButton>
        </SelectBox>
        <Row names={['cursors']} />
        <RuleBox $w={8}><Rule $h="22px" /></RuleBox>
        {Object.keys(filters).map((n) => (
          <ToolButton key={n} aria-label={`Filter ${n}`}>
            <svg width="20" height="20" viewBox="0 0 20 20">
              {filters[n]}
              <Funnel c={n.startsWith('Mesh') ? '#b51fe0' : undefined} />
            </svg>
          </ToolButton>
        ))}
        <Rule $gap={7} />
      </FilterBar>
    </Shell>
  );
}
